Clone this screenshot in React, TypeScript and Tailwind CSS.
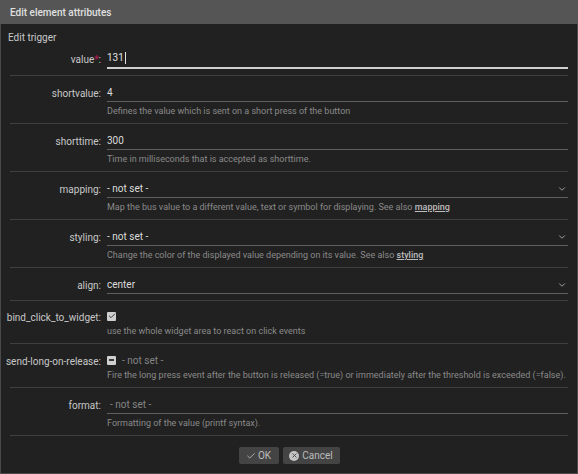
import { Check, ChevronDown, X } from 'lucide-react';
import type { ReactNode } from 'react';

const font = { fontFamily: 'Roboto, "Noto Sans", sans-serif' };

function Label({ children, required }: { children: ReactNode; required?: boolean }) {
  return (
    <div className="flex h-[18px] items-center justify-end whitespace-nowrap text-[10px] text-[#c8c8c8]">
      {children}
      {required && <span className="text-[#c2185b]">*</span>}:
    </div>
  );
}

function Desc({ children }: { children: ReactNode }) {
  return <div className="mt-[2px] text-[9px] leading-[14px] text-[#8a8a8a]">{children}</div>;
}

function TextField({ value, placeholder, select }: { value?: string; placeholder?: string; select?: boolean }) {
  return (
    <div className="flex h-[18px] items-center border-b border-[#5e5e5e] text-[10px]">
      {value ? (
        <span className="text-[#dcdcdc]">{value}</span>
      ) : (
        <span className="pl-[3px] text-[#858585]">{placeholder}</span>
      )}
      {select && <ChevronDown className="ml-auto mr-[1px] text-[#a8a8a8]" size={10} strokeWidth={2.2} />}
    </div>
  );
}

function Row({ label, required, children, className }: { label: string; required?: boolean; children: ReactNode; className: string }) {
  return (
    <div className={`grid grid-cols-[91px_1fr] gap-x-[6px] border-b border-[#404040] ${className}`}>
      <Label required={required}>{label}</Label>
      <div>{children}</div>
    </div>
  );
}

function Box({ kind }: { kind: 'check' | 'dash' }) {
  return (
    <span className="flex h-[9px] w-[9px] items-center justify-center rounded-[1px] bg-[#cfcfcf]">
      {kind === 'check' ? (
        <Check size={8} strokeWidth={3} className="text-[#3a3a3a]" />
      ) : (
        <span className="h-[1.5px] w-[5px] bg-[#3a3a3a]" />
      )}
    </span>
  );
}

function DocLink({ children }: { children: ReactNode }) {
  return <span className="font-medium text-[#bdbdbd] underline">{children}</span>;
}

export default function App() {
  return (
    <div className="flex h-[474px] w-[578px] flex-col bg-[#212121]" style={font}>
      <div className="flex h-[24px] shrink-0 items-center bg-[#555555] px-[10px] text-[10px] font-medium text-[#e0e0e0]">
        Edit element attributes
      </div>
      <div className="flex flex-1 flex-col border-x border-b border-[#4a4a4a]">
        <div className="px-[7px] pt-[7px] text-[10px] leading-[14px] text-[#c8c8c8]">Edit trigger</div>
        <div className="mx-[9px]">
          <div className="grid grid-cols-[91px_1fr] gap-x-[6px] border-b border-[#404040] pb-[6px] pt-[4px]">
            <div className="flex h-[20px] items-start pt-[1px] justify-end">
              <Label required>value</Label>
            </div>
            <div className="flex h-[20px] items-center border-b-2 border-[#cfcfcf] pb-[1px] text-[10px] text-[#e0e0e0]">
              131<span className="ml-[1px] h-[12px] w-px bg-[#e0e0e0]" />
            </div>
          </div>

          <Row label="shortvalue" className="pb-[5px] pt-[8px]">
            <TextField value="4" />
            <Desc>Defines the value which is sent on a short press of the button</Desc>
          </Row>

          <Row label="shorttime" className="pb-[5px] pt-[8px]">
            <TextField value="300" />
            <Desc>Time in milliseconds that is accepted as shorttime.</Desc>
          </Row>

          <Row label="mapping" className="pb-[5px] pt-[8px]">
            <TextField value="- not set -" select />
            <Desc>
              Map the bus value to a different value, text or symbol for displaying. See also <DocLink>mapping</DocLink>
            </Desc>
          </Row>

          <Row label="styling" className="pb-[5px] pt-[8px]">
            <TextField value="- not set -" select />
            <Desc>
              Change the color of the displayed value depending on its value. See also <DocLink>styling</DocLink>
            </Desc>
          </Row>

          <Row label="align" className="pb-[6px] pt-[8px]">
            <TextField value="center" select />
          </Row>

          <div className="grid grid-cols-[91px_1fr] gap-x-[6px] border-b border-[#404040] pb-[5px] pt-[7px]">
            <Label>bind_click_to_widget</Label>
            <div>
              <div className="flex h-[16px] items-center">
                <Box kind="check" />
              </div>
              <div className="text-[9px] leading-[14px] text-[#8a8a8a]">use the whole widget area to react on click events</div>
            </div>
          </div>

          <div className="grid grid-cols-[91px_1fr] gap-x-[6px] border-b border-[#404040] pb-[5px] pt-[8px]">
            <Label>send-long-on-release</Label>
            <div>
              <div className="flex h-[16px] items-center gap-[6px]">
                <Box kind="dash" />
                <span className="text-[10px] text-[#858585]">- not set -</span>
              </div>
              <div className="whitespace-nowrap text-[9px] leading-[14px] text-[#8a8a8a]">
                Fire the long press event after the button is released (=true) or immediately after the threshold is exceeded (=false).
              </div>
            </div>
          </div>

          <Row label="format" className="pb-[5px] pt-[8px]">
            <TextField placeholder="- not set -" />
            <Desc>Formatting of the value (printf syntax).</Desc>
          </Row>
        </div>

        <div className="flex justify-center gap-[4px] pt-[11px]">
          <button className="flex h-[17px] w-[40px] items-center justify-center gap-[2px] rounded-[2px] bg-[#444444] text-[10px] text-[#bdbdbd]">
            <Check size={10} strokeWidth={2} />
            OK
          </button>
          <button className="flex h-[17px] w-[57px] items-center justify-center gap-[3px] rounded-[2px] bg-[#444444] text-[10px] text-[#bdbdbd]">
            <span className="flex h-[10px] w-[10px] items-center justify-center rounded-full bg-[#c4c4c4]">
              <X size={7} strokeWidth={3} className="text-[#444444]" />
            </span>
            Cancel
          </button>
        </div>
      </div>
    </div>
  );
}
